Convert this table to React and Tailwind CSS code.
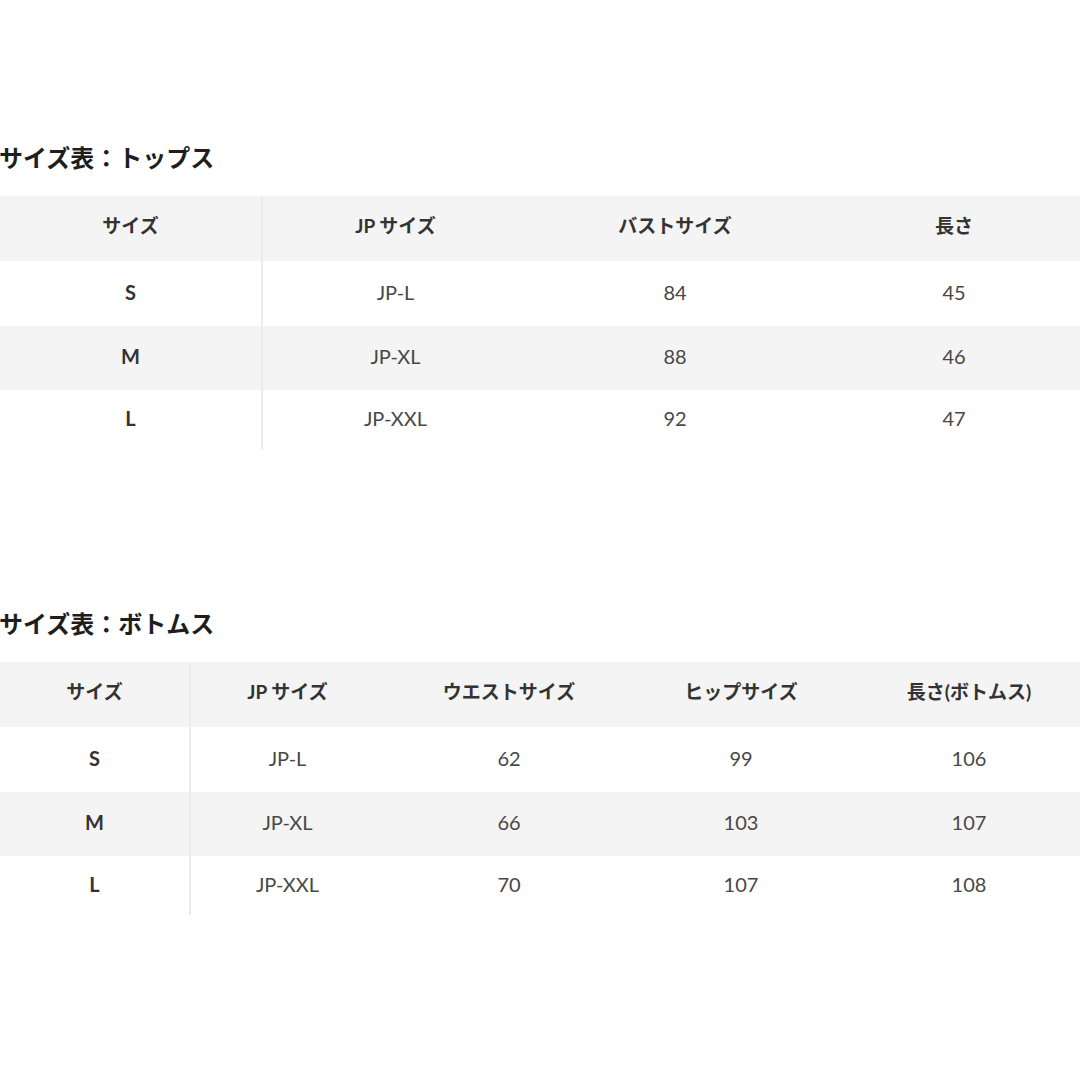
import React from "react";

const font = "font-['Lato','Noto_Sans_CJK_JP',sans-serif]";

function SizeTable({ widths, headers, rows }) {
  const heights = ["h-[65px]", "h-[65px]", "h-[64px]", "h-[59px]"];
  return (
    <table className="table-fixed border-collapse" style={{ width: widths.reduce((a, b) => a + b, 0) }}>
      <colgroup>
        {widths.map((w, i) => (
          <col key={i} style={{ width: w }} />
        ))}
      </colgroup>
      <thead>
        <tr className={`${heights[0]} bg-[#f4f4f4]`}>
          {headers.map((h, i) => (
            <th
              key={i}
              className={`p-0 pb-[4px] text-center align-middle text-[19px] font-bold text-[#333] ${i === 0 ? "border-r-2 border-[#ebebeb]" : ""}`}
            >
              {h}
            </th>
          ))}
        </tr>
      </thead>
      <tbody>
        {rows.map((r, ri) => (
          <tr key={ri} className={`${heights[ri + 1]} ${ri === 1 ? "bg-[#f4f4f4]" : "bg-white"}`}>
            {r.map((c, i) => (
              <td
                key={i}
                className={`p-0 pb-[4px] text-center align-middle text-[20px] ${
                  i === 0 ? "border-r-2 border-[#ebebeb] font-bold text-[#333]" : "text-[#484848]"
                }`}
              >
                {c}
              </td>
            ))}
          </tr>
        ))}
      </tbody>
    </table>
  );
}

export default function App() {
  return (
    <div className={`w-[1080px] h-[1080px] overflow-hidden bg-white ${font}`}>
      <div className="pt-[142px]">
        <h2 className="h-[32px] leading-[32px] text-[24px] font-bold text-[#1e1e1e] -ml-[1px]">サイズ表：トップス</h2>
        <div className="mt-[22px]">
          <SizeTable
            widths={[262, 266, 294, 264]}
            headers={["サイズ", "JP サイズ", "バストサイズ", "長さ"]}
            rows={[
              ["S", "JP-L", "84", "45"],
              ["M", "JP-XL", "88", "46"],
              ["L", "JP-XXL", "92", "47"],
            ]}
          />
        </div>
        <h2 className="mt-[159px] h-[32px] leading-[32px] text-[24px] font-bold text-[#1e1e1e] -ml-[1px]">サイズ表：ボトムス</h2>
        <div className="mt-[22px]">
          <SizeTable
            widths={[190, 194, 250, 214, 242]}
            headers={["サイズ", "JP サイズ", "ウエストサイズ", "ヒップサイズ", "長さ(ボトムス)"]}
            rows={[
              ["S", "JP-L", "62", "99", "106"],
              ["M", "JP-XL", "66", "103", "107"],
              ["L", "JP-XXL", "70", "107", "108"],
            ]}
          />
        </div>
      </div>
    </div>
  );
}
